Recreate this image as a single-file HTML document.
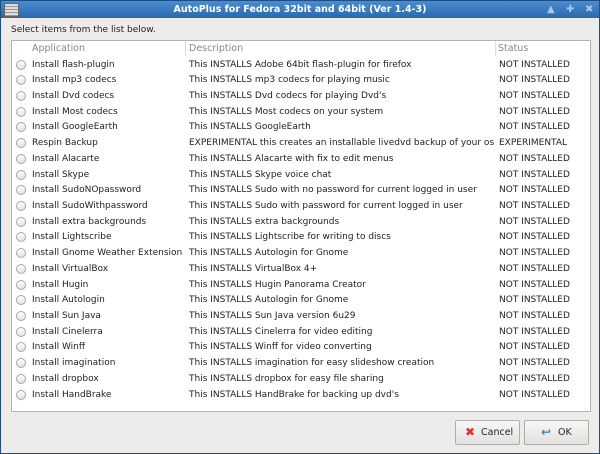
<!DOCTYPE html>
<html><head><style>
body{margin:0;width:600px;height:454px;overflow:hidden;font-family:"DejaVu Sans",sans-serif;font-size:9px;color:#222}
.win{position:absolute;left:0;top:0;width:598px;height:452px;border:1px solid #1d4f86;background:#edeceb}
.title{position:absolute;left:0;top:0;width:598px;height:17px;background:linear-gradient(#4a8cd0,#2a68ad);color:#fff;font-weight:bold;text-align:center;line-height:17px;font-size:9.5px}
.menu{position:absolute;left:3px;top:2px;width:13px;height:12px;background:repeating-linear-gradient(#ddd 0 2px,#999 2px 3px);border:1px solid #666}
.tb{position:absolute;top:3px;color:#a8c6e8;font-size:10px}
.lbl{position:absolute;left:10px;top:24px}
.list{position:absolute;left:10px;top:39px;width:578px;height:370px;background:#fff;border:1px solid #b5b3ae}
.hdr{position:absolute;top:2px;color:#888;font-size:9.5px}
.sep{position:absolute;top:0;width:1px;height:15px;background:#ddd}
.row{position:absolute;left:0;height:15px;width:578px}
.row span{position:absolute;top:0;white-space:nowrap;line-height:15px}
.rb{position:absolute;left:4px;top:2px;width:8px;height:8px;border:1px solid #a9a7a3;border-radius:50%;background:linear-gradient(#fff,#e4e2df)}
.btn{position:absolute;top:419px;width:63px;height:23px;border:1px solid #b1aeaa;border-radius:2px;background:linear-gradient(#f8f8f7,#e3e1de);font-size:9.5px;line-height:23px}
</style></head><body>
<div class="win">
<div class="title">AutoPlus for Fedora 32bit and 64bit (Ver 1.4-3)</div>
<div class="menu"></div>
<div class="tb" style="left:546px">▲</div><div class="tb" style="left:565px">✚</div><div class="tb" style="left:584px">✖</div>
<div class="lbl">Select items from the list below.</div>
<div class="list">
<span class="hdr" style="left:20px">Application</span>
<span class="hdr" style="left:177px">Description</span>
<span class="hdr" style="left:486px">Status</span>
<div class="sep" style="left:173px"></div><div class="sep" style="left:483px"></div>
<div id="rows"></div>
</div>
<div class="btn" style="left:454px"><span style="position:absolute;left:9px;color:#d33;font-weight:bold;font-size:12px">✖</span><span style="position:absolute;left:25px">Cancel</span></div>
<div class="btn" style="left:523px"><span style="position:absolute;left:16px;color:#4a7fc4;font-weight:bold;font-size:12px">↩</span><span style="position:absolute;left:33px">OK</span></div>
</div>
<script>
var d=[["Install flash-plugin","This INSTALLS Adobe 64bit flash-plugin for firefox","NOT INSTALLED"],
["Install mp3 codecs","This INSTALLS mp3 codecs for playing music","NOT INSTALLED"],
["Install Dvd codecs","This INSTALLS Dvd codecs for playing Dvd's","NOT INSTALLED"],
["Install Most codecs","This INSTALLS Most codecs on your system","NOT INSTALLED"],
["Install GoogleEarth","This INSTALLS GoogleEarth","NOT INSTALLED"],
["Respin Backup","EXPERIMENTAL this creates an installable livedvd backup of your os","EXPERIMENTAL"],
["Install Alacarte","This INSTALLS Alacarte with fix to edit menus","NOT INSTALLED"],
["Install Skype","This INSTALLS Skype voice chat","NOT INSTALLED"],
["Install SudoNOpassword","This INSTALLS Sudo with no password for current logged in user","NOT INSTALLED"],
["Install SudoWithpassword","This INSTALLS Sudo with password for current logged in user","NOT INSTALLED"],
["Install extra backgrounds","This INSTALLS extra backgrounds","NOT INSTALLED"],
["Install Lightscribe","This INSTALLS Lightscribe for writing to discs","NOT INSTALLED"],
["Install Gnome Weather Extension","This INSTALLS Autologin for Gnome","NOT INSTALLED"],
["Install VirtualBox","This INSTALLS VirtualBox 4+","NOT INSTALLED"],
["Install Hugin","This INSTALLS Hugin Panorama Creator","NOT INSTALLED"],
["Install Autologin","This INSTALLS Autologin for Gnome","NOT INSTALLED"],
["Install Sun Java","This INSTALLS Sun Java version 6u29","NOT INSTALLED"],
["Install Cinelerra","This INSTALLS Cinelerra for video editing","NOT INSTALLED"],
["Install Winff","This INSTALLS Winff for video converting","NOT INSTALLED"],
["Install imagination","This INSTALLS imagination for easy slideshow creation","NOT INSTALLED"],
["Install dropbox","This INSTALLS dropbox for easy file sharing","NOT INSTALLED"],
["Install HandBrake","This INSTALLS HandBrake for backing up dvd's","NOT INSTALLED"]];
var h="";d.forEach(function(r,i){h+='<div class="row" style="top:'+(16.5+i*15.72)+'px"><div class="rb"></div><span style="left:20px">'+r[0]+'</span><span style="left:177px">'+r[1]+'</span><span style="left:487px">'+r[2]+'</span></div>'});
document.getElementById("rows").innerHTML=h;
</script>
</body></html>
